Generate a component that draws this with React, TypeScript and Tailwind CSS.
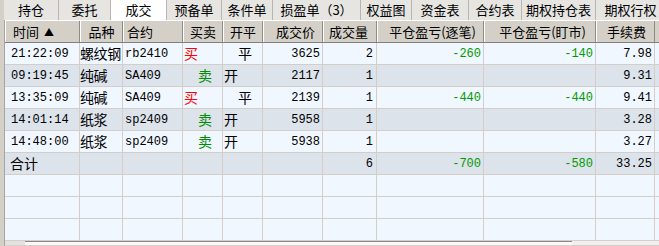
const tabs = [
  { label: "持仓", w: "w-[55px]" },
  { label: "委托", w: "w-[52px]" },
  { label: "成交", w: "w-[56px]", active: true },
  { label: "预备单", w: "w-[55px]" },
  { label: "条件单", w: "w-[51px]" },
  { label: "损盈单（3）", w: "w-[88px]" },
  { label: "权益图", w: "w-[51px]" },
  { label: "资金表", w: "w-[57px]" },
  { label: "合约表", w: "w-[53px]" },
  { label: "期权持仓表", w: "w-[74px]" },
  { label: "期权行权", w: "w-[70px]" },
];

const cols = [
  { title: "时间 ▲", w: "w-[75px]", head: "justify-start pl-[7px]" },
  { title: "品种", w: "w-[43px]", head: "justify-center" },
  { title: "合约", w: "w-[60px]", head: "justify-start pl-[3px]" },
  { title: "买卖", w: "w-[40px]", head: "justify-center" },
  { title: "开平", w: "w-[40px]", head: "justify-center" },
  { title: "成交价", w: "w-[60px]", head: "justify-end pr-[7px]" },
  { title: "成交量", w: "w-[54px]", head: "justify-end pr-[8px]" },
  { title: "平仓盈亏(逐笔)", w: "w-[107px]", head: "justify-end pr-[7px]" },
  { title: "平仓盈亏(盯市)", w: "w-[112px]", head: "justify-end pr-[9px]" },
  { title: "手续费", w: "w-[59px]", head: "justify-end pr-[8px]" },
];

type Trade = {
  time: string;
  name: string;
  code: string;
  side: "买" | "卖";
  open: "开" | "平";
  price: string;
  qty: string;
  pnl1: string;
  pnl2: string;
  fee: string;
};

const trades: Trade[] = [
  { time: "21:22:09", name: "螺纹钢", code: "rb2410", side: "买", open: "平", price: "3625", qty: "2", pnl1: "-260", pnl2: "-140", fee: "7.98" },
  { time: "09:19:45", name: "纯碱", code: "SA409", side: "卖", open: "开", price: "2117", qty: "1", pnl1: "", pnl2: "", fee: "9.31" },
  { time: "13:35:09", name: "纯碱", code: "SA409", side: "买", open: "平", price: "2139", qty: "1", pnl1: "-440", pnl2: "-440", fee: "9.41" },
  { time: "14:01:14", name: "纸浆", code: "sp2409", side: "卖", open: "开", price: "5958", qty: "1", pnl1: "", pnl2: "", fee: "3.28" },
  { time: "14:48:00", name: "纸浆", code: "sp2409", side: "卖", open: "开", price: "5938", qty: "1", pnl1: "", pnl2: "", fee: "3.27" },
];

const cell = "h-full flex items-center border-r border-[#d3cec8] shrink-0 whitespace-nowrap overflow-hidden";
const mono = "font-['Liberation_Mono',monospace] text-[12px]";
const cjk = "text-[14px]";

function Row({ t, dark }: { t: Trade; dark: boolean }) {
  return (
    <div className={`flex h-[22px] border-b border-[#d3cec8] ${dark ? "bg-[#dce3eb]" : "bg-[#f0f7fe]"}`}>
      <div className={`${cell} w-[75px] pl-[6px] ${mono}`}>{t.time}</div>
      <div className={`${cell} w-[43px] ${cjk} tracking-[-0.4px]`}>{t.name}</div>
      <div className={`${cell} w-[60px] pl-[2px] ${mono}`}>{t.code}</div>
      <div className={`${cell} w-[40px] ${cjk} ${t.side === "买" ? "pl-[1px] text-[#ff0000]" : "pl-[15px] text-[#008c00]"}`}>{t.side}</div>
      <div className={`${cell} w-[40px] ${cjk} ${t.open === "开" ? "pl-[1px]" : "pl-[15px]"}`}>{t.open}</div>
      <div className={`${cell} w-[60px] justify-end pr-[2px] ${mono}`}>{t.price}</div>
      <div className={`${cell} w-[54px] justify-end pr-[3px] ${mono}`}>{t.qty}</div>
      <div className={`${cell} w-[107px] justify-end pr-[2px] ${mono} text-[#009a00]`}>{t.pnl1}</div>
      <div className={`${cell} w-[112px] justify-end pr-[2px] ${mono} text-[#009a00]`}>{t.pnl2}</div>
      <div className={`${cell} w-[59px] justify-end pr-[2px] ${mono}`}>{t.fee}</div>
      <div className="h-full flex-1" />
    </div>
  );
}

function EmptyRow() {
  return (
    <div className="flex h-[22px] border-b border-[#d3cec8] bg-[#f0f7fe]">
      {cols.map((c) => (
        <div key={c.title} className={`${cell} ${c.w}`} />
      ))}
      <div className="h-full flex-1" />
    </div>
  );
}

export default function App() {
  return (
    <div className="w-[659px] h-[246px] overflow-hidden bg-[#d4d0c8] font-['Noto_Sans_CJK_SC','Noto_Sans',sans-serif] text-black flex flex-col">
      <div className="flex h-[20px] shrink-0 pl-[4px] bg-[#d4d0c8]">
        {tabs.map((t) => (
          <div
            key={t.label}
            className={`${t.w} shrink-0 h-full flex items-center justify-center text-[13px] whitespace-nowrap border-r border-[#b9b5ae] ${
              t.active ? "bg-white" : "bg-[#e6e5e2]"
            }`}
          >
            {t.label}
          </div>
        ))}
      </div>

      <div className="flex flex-1 min-h-0">
        <div className="w-[5px] shrink-0 bg-[#d4d0c8] border-r border-[#a9a59e]" />
        <div className="flex-1 flex flex-col min-w-0">
          <div className="flex h-[23px] shrink-0 bg-[#d4d0c8] border-t border-white border-b border-b-[#808080]">
            {cols.map((c) => (
              <div
                key={c.title}
                className={`${c.w} shrink-0 h-full flex items-center text-[13px] whitespace-nowrap border-l border-white border-r border-r-[#8f8b85] ${c.head}`}
              >
                {c.title === "时间 ▲" ? (
                  <span>
                    时间 <span className="text-[10px] relative -top-[1px] pl-[2px]">▲</span>
                  </span>
                ) : (
                  c.title
                )}
              </div>
            ))}
            <div className="flex-1" />
          </div>

          {trades.map((t, i) => (
            <Row key={i} t={t} dark={i % 2 === 1} />
          ))}

          <div className="flex h-[22px] border-b border-[#d3cec8] bg-[#dce3eb]">
            <div className={`${cell} w-[75px] pl-[5px] ${cjk}`}>合计</div>
            <div className={`${cell} w-[43px]`} />
            <div className={`${cell} w-[60px]`} />
            <div className={`${cell} w-[40px]`} />
            <div className={`${cell} w-[40px]`} />
            <div className={`${cell} w-[60px]`} />
            <div className={`${cell} w-[54px] justify-end pr-[3px] ${mono}`}>6</div>
            <div className={`${cell} w-[107px] justify-end pr-[2px] ${mono} text-[#009a00]`}>-700</div>
            <div className={`${cell} w-[112px] justify-end pr-[2px] ${mono} text-[#009a00]`}>-580</div>
            <div className={`${cell} w-[59px] justify-end pr-[2px] ${mono}`}>33.25</div>
            <div className="h-full flex-1" />
          </div>

          <EmptyRow />
          <EmptyRow />
          <EmptyRow />

          <div className="flex h-[4px] shrink-0 bg-[#f4f4f4]">
            <div className="w-[20px] bg-[#e2e2e2]" />
            <div className="w-[547px] border-t border-[#8a8a8a] bg-[#fafafa]" />
            <div className="flex-1 bg-[#efefef]" />
          </div>
        </div>
      </div>
    </div>
  );
}
